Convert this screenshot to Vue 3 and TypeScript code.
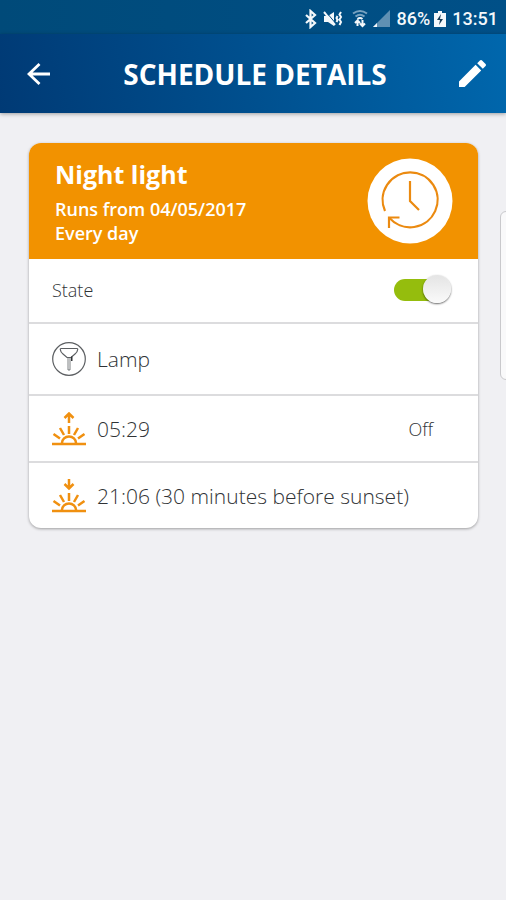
<script setup lang="ts">
import { ref } from 'vue'

interface Trigger {
  kind: 'sunrise' | 'sunset'
  label: string
  action?: string
}

const enabled = ref(true)
const triggers: Trigger[] = [
  { kind: 'sunrise', label: '05:29', action: 'Off' },
  { kind: 'sunset', label: '21:06 (30 minutes before sunset)' },
]
</script>

<template>
  <div class="screen">
    <div class="status-bar">
      <svg class="glyph bluetooth" viewBox="0 0 14 20" aria-hidden="true">
        <path d="M2 6l9 8-4.500 4V2L11 6l-9 8" fill="none" stroke="currentColor" stroke-width="2.200" />
      </svg>
      <svg class="glyph mute" viewBox="0 0 20 20" aria-hidden="true">
        <path d="M1 7h4l6-4v14l-6-4H1z" fill="currentColor" />
        <path d="M1 3l11 13" stroke="currentColor" stroke-width="2" />
        <path d="M3.500 3.500l8 9.500" stroke="#004a80" stroke-width="1" />
        <path d="M14.500 7l-1 2 1 2-1 2M18 3l-1.500 2.500L18 8l-1.500 2.500L18 13l-1.500 3" fill="none" stroke="currentColor" stroke-width="2" />
      </svg>
      <svg class="glyph wifi" viewBox="0 0 16 20" aria-hidden="true">
        <path d="M1 4.500q7-5 14 0M3.500 7.500q4.500-3.500 9 0" fill="none" stroke="#78a2c0" stroke-width="2" />
        <path d="M5.500 10q2.500-2 5 0M5.500 11v6M3 14l2.500-2.500L8 14M10.500 11v6M8 14.500l2.500 2.500 2.500-2.500" fill="none" stroke="currentColor" stroke-width="2" />
      </svg>
      <svg class="glyph signal" viewBox="0 0 18 20" aria-hidden="true">
        <path d="M17 1v17H0z" fill="#5f90b3" />
        <path d="M4 14v4H0z" fill="currentColor" />
      </svg>
      <span class="percent">86%</span>
      <svg class="glyph battery" viewBox="0 0 12 18" aria-hidden="true">
        <path d="M4 1h4v2h4v14H0V3h4z" fill="currentColor" />
        <path d="M7 4L3 10h3l-1 5 4-6H6z" fill="#173c58" />
      </svg>
      <time>13:51</time>
    </div>

    <header class="app-bar">
      <button class="icon-button" type="button" aria-label="Back">
        <svg class="back" viewBox="0 0 24 24" aria-hidden="true">
          <path d="M12.500 2L2 12l10.500 10M2.500 12H23" fill="none" stroke="currentColor" stroke-width="2.800" />
        </svg>
      </button>
      <h1>SCHEDULE DETAILS</h1>
      <button class="icon-button" type="button" aria-label="Edit">
        <svg class="edit" viewBox="3 3 18 18" aria-hidden="true">
          <path d="M3 17.250V21h3.750L17.810 9.940l-3.750-3.750L3 17.250zM20.710 7.040c.39-.39.39-1.020 0-1.410l-2.340-2.340c-.39-.39-1.020-.39-1.410 0l-1.830 1.830 3.750 3.750 1.830-1.830z" fill="currentColor" />
        </svg>
      </button>
    </header>

    <main>
      <section class="card">
        <div class="banner">
          <div class="summary">
            <h2>Night light</h2>
            <p>Runs from 04/05/2017</p>
            <p>Every day</p>
          </div>
          <svg class="clock" viewBox="0 0 86 86" aria-hidden="true">
            <circle cx="43" cy="43" r="42.500" fill="#fff" />
            <g fill="none" stroke="#eb8a10" stroke-width="2.200">
              <path d="M18 53A27.500 27.500 0 1 1 22.500 60" />
              <path d="M22 70V59.500H32.500M43 23v20l9 9" />
            </g>
          </svg>
        </div>

        <div class="row state-row">
          <label for="schedule-state">State</label>
          <input id="schedule-state" v-model="enabled" class="toggle" type="checkbox" role="switch" />
        </div>

        <div class="row device-row">
          <svg class="row-icon" viewBox="0 0 34 34" aria-hidden="true">
            <g fill="none" stroke="#5c5f62">
              <circle cx="17" cy="17" r="16.300" stroke-width="1.200" />
              <path d="M9 6.500h16q.8 0 .7 1-.2 2.500-2.700 4.500l-4 3.500h-4l-4-3.500q-2.500-2-2.700-4.500-.1-1 .7-1z" stroke-width="1.200" />
              <path d="M16 15.500V28h2V15.500" stroke-width=".8" />
            </g>
            <path d="M19 14.500h1.500V19H19z" fill="#303336" />
          </svg>
          <span>Lamp</span>
        </div>

        <div v-for="trigger in triggers" :key="trigger.kind" class="row trigger-row">
          <svg class="row-icon" viewBox="0 0 34 34" aria-hidden="true">
            <g fill="none" stroke="#f09010" stroke-width="2.500">
              <path d="M0 32h34" />
              <path d="M10 31a7 6.500 0 0 1 14 0M17 14v8M8 16l4 7M26 16l-4 7M1.500 22l6.500 4.500M32.500 22L26 26.500" />
              <path v-if="trigger.kind === 'sunrise'" d="M17 11V2M12.500 6L17 1.500 21.500 6" />
              <path v-else d="M17 0v9M12.500 5L17 9.500 21.500 5" />
            </g>
          </svg>
          <span>{{ trigger.label }}</span>
          <span v-if="trigger.action" class="action">{{ trigger.action }}</span>
        </div>
      </section>
    </main>

    <div class="edge-handle"></div>
  </div>
</template>

<style>
body {
  margin: 0;
  background: #f0f0f3;
}
</style>

<style scoped>
.screen {
  position: relative;
  min-height: 100vh;
  overflow: hidden;
  background: #f0f0f3;
  color: #303336;
  font-family: "Open Sans", sans-serif;
}

.status-bar {
  display: flex;
  align-items: center;
  justify-content: flex-end;
  box-sizing: border-box;
  height: 34px;
  padding: 3px 8px 0 0;
  background: linear-gradient(90deg, #004a79, #005088);
  color: #f4f8fb;
  font: 500 18px/24px Roboto, sans-serif;
}

.glyph {
  flex: none;
  height: 20px;
}

.bluetooth {
  width: 14px;
  margin-right: 5px;
}

.mute {
  width: 20px;
  margin-right: 9px;
}

.wifi {
  width: 16px;
  margin-right: 5px;
}

.signal {
  width: 18px;
  margin-right: 6px;
}

.battery {
  width: 12px;
  height: 18px;
  margin: 0 6px 0 4px;
}

.app-bar {
  display: flex;
  align-items: center;
  justify-content: space-between;
  height: 79px;
  padding: 0 20px 0 27px;
  background: linear-gradient(80deg, #003a75, #00508f 50%, #0067ad);
  box-shadow: 0 1px 4px rgba(0, 0, 0, 0.35);
  color: #fff;
}

.app-bar h1 {
  margin: 0;
  font-size: 28px;
  font-weight: 700;
  line-height: 36px;
}

.icon-button {
  display: flex;
  padding: 0;
  border: 0;
  background: none;
  color: inherit;
}

.back {
  width: 24px;
  height: 24px;
}

.edit {
  width: 27px;
  height: 27px;
}

main {
  padding: 30px 28px 30px 29px;
}

.card {
  overflow: hidden;
  border-radius: 12px;
  background: #fff;
  box-shadow: 0 1px 3px rgba(0, 0, 0, 0.35);
}

.banner {
  display: flex;
  align-items: center;
  justify-content: space-between;
  height: 116px;
  padding: 0 25px 0 26px;
  background: #f29200;
  color: #fff;
}

.summary h2,
.summary p {
  margin: 0;
}

.summary h2 {
  margin-bottom: 6px;
  font-size: 25px;
  font-weight: 700;
  line-height: 34px;
}

.summary p {
  font-size: 18px;
  font-weight: 600;
  line-height: 24px;
}

.clock {
  flex: none;
  width: 86px;
  height: 86px;
}

.row {
  display: flex;
  align-items: center;
  gap: 11px;
  box-sizing: border-box;
  height: 67px;
  padding: 0 26px 0 23px;
  border-top: 2px solid #dcdcde;
  font-size: 21px;
  font-weight: 300;
  line-height: 28px;
}

.state-row {
  justify-content: space-between;
  height: 63px;
  padding-bottom: 2px;
  border-top: 0;
  font-size: 18px;
}

.device-row {
  height: 72px;
}

.row-icon {
  flex: none;
  width: 34px;
  height: 34px;
}

.action {
  margin-left: auto;
  padding-right: 19px;
  font-size: 18px;
}

.toggle {
  position: relative;
  width: 58px;
  height: 30px;
  margin: 0;
  appearance: none;
}

.toggle::before {
  position: absolute;
  inset: 4px 6px 4px 0;
  border-radius: 11px;
  background: #b8b8ba;
  content: "";
}

.toggle::after {
  position: absolute;
  top: 0;
  left: 0;
  width: 28px;
  height: 28px;
  border-radius: 50%;
  background: linear-gradient(#e4e4e4, #fafafa);
  box-shadow: 0 1px 2px rgba(0, 0, 0, 0.6);
  content: "";
}

.toggle:checked::before {
  background: #95bd0d;
}

.toggle:checked::after {
  left: 29px;
}

.edge-handle {
  position: absolute;
  top: 211px;
  right: -8px;
  box-sizing: border-box;
  width: 14px;
  height: 169px;
  border: 1px solid #c9c9cc;
  border-radius: 6px;
  background: #f9f9fa;
}
</style>
